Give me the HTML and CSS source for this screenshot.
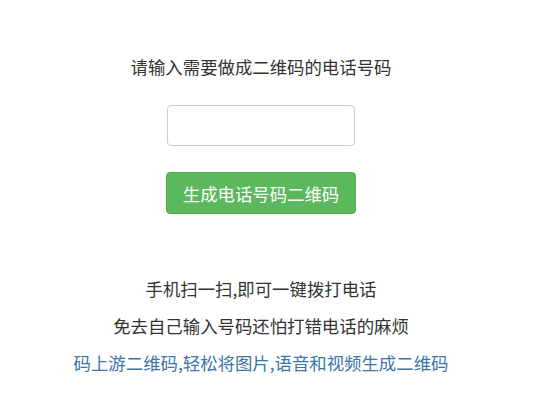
FILE: index.html
```html
<!DOCTYPE html>
<html lang="zh-CN">
<head>
  <meta charset="UTF-8" />
  <meta name="viewport" content="width=device-width, initial-scale=1.0"/>
  <title>电话二维码</title>
  <link rel="stylesheet" href="styles.css">
</head>
<body>
  <div class="page">
    <p class="title">请输入需要做成二维码的电话号码</p>
    <input type="tel" class="phone-input" id="phone" />
    <button class="btn-make">生成电话号码二维码</button>

    <div class="tips">
      <p>手机扫一扫,即可一键拨打电话</p>
      <p>免去自己输入号码还怕打错电话的麻烦</p>
      <p class="brand">码上游二维码,轻松将图片,语音和视频生成二维码</p>
    </div>
  </div>
</body>
</html>
```

FILE: styles.css
```css
body {
  margin: 0;
  background: #fff;
  font-family: "Microsoft YaHei", "Noto Sans CJK SC", sans-serif;
  color: #333;
}

.page {
  width: 522px;
  padding-top: 49px;
  display: flex;
  flex-direction: column;
  align-items: center;
}

.title {
  margin: 0;
  font-size: 17.4px;
  line-height: 36px;
}

.phone-input {
  margin-top: 20px;
  width: 188px;
  height: 41px;
  box-sizing: border-box;
  border: 1px solid #ccc;
  border-radius: 4px;
  padding: 6px 12px;
  font-size: 16px;
  outline: none;
}

.btn-make {
  margin-top: 26px;
  width: 190px;
  height: 42px;
  background: #5cb85c;
  color: #fff;
  border: 1px solid #4cae4c;
  border-radius: 4px;
  font-family: inherit;
  font-size: 17.4px;
  cursor: pointer;
}

.tips {
  margin-top: 56px;
  text-align: center;
}

.tips p {
  margin: 0;
  font-size: 17.4px;
  line-height: 37px;
}

.tips .brand {
  color: #3b76a8;
}
```
